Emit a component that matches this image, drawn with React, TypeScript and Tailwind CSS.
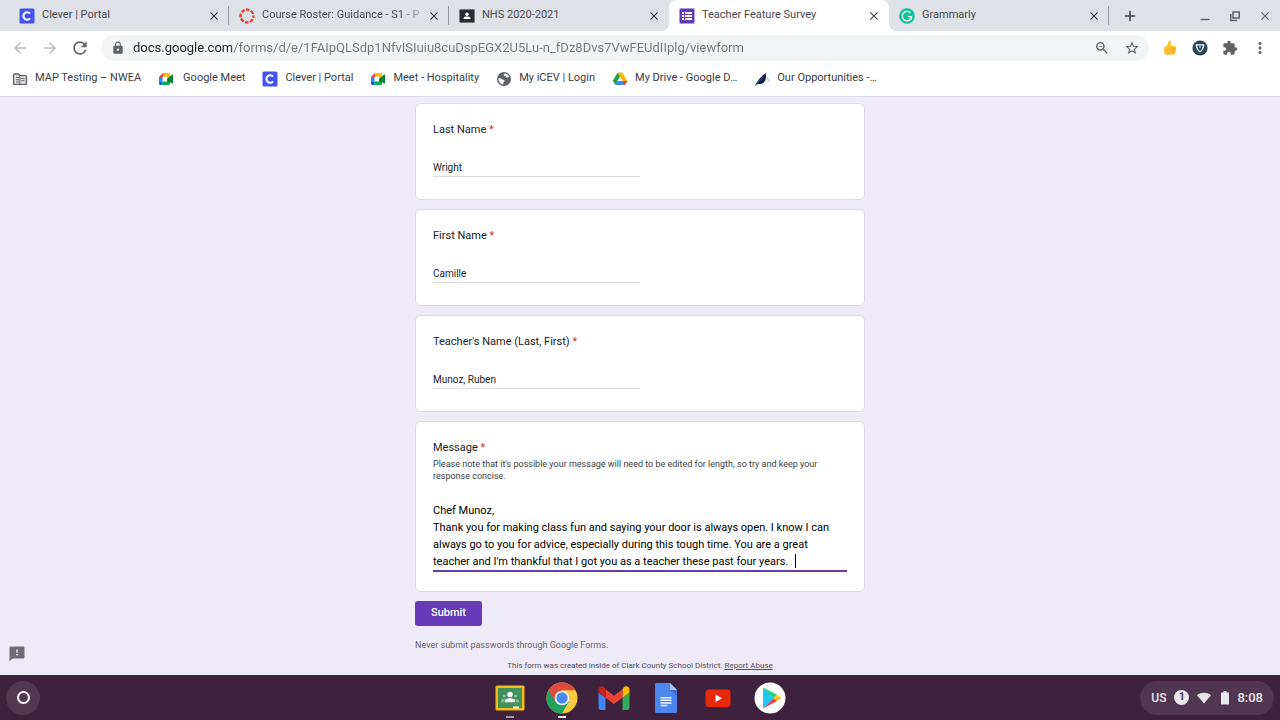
import type { ReactNode } from "react";
import {
  MdAdd,
  MdArrowBack,
  MdArrowForward,
  MdClose,
  MdExtension,
  MdFeedback,
  MdLock,
  MdMoreVert,
  MdOutlineZoomOut,
  MdRefresh,
  MdStarBorder,
} from "react-icons/md";

/* ---------- small site icons ---------- */

const CleverIcon = () => (
  <svg viewBox="0 0 16 16" className="size-4 shrink-0">
    <rect x="0.5" y="0.5" width="15" height="15" rx="1.5" fill="#4353f4" />
    <path d="M11 5.6A3.7 3.7 0 1 0 11 10.4" fill="none" stroke="#fff" strokeWidth="2.1" />
  </svg>
);

const CanvasIcon = () => (
  <svg viewBox="0 0 16 16" className="size-4 shrink-0">
    <circle cx="8" cy="8" r="6.4" fill="none" stroke="#e8402f" strokeWidth="2.4" strokeDasharray="3.6 1.427" strokeDashoffset="1.8" />
  </svg>
);

const ClassroomTabIcon = () => (
  <svg viewBox="0 0 16 16" className="size-4 shrink-0">
    <rect x="0.5" y="1.5" width="15" height="13" rx="1" fill="#2b2c2f" stroke="#77797c" />
    <circle cx="8" cy="6.2" r="1.7" fill="#fff" />
    <path d="M4.5 11V10.2C4.5 8.9 6.6 8.5 8 8.5s3.5.4 3.5 1.7V11z" fill="#fff" />
  </svg>
);

const FormsIcon = () => (
  <svg viewBox="0 0 16 16" className="size-4 shrink-0">
    <rect x="0.5" y="0.5" width="15" height="15" rx="1" fill="#673ab7" />
    <path d="M3 4h2v2H3zM6 4h7v2H6zM3 7h2v2H3zM6 7h7v2H6zM3 10h2v2H3zM6 10h7v2H6z" fill="#fff" />
  </svg>
);

const GrammarlyIcon = () => (
  <svg viewBox="0 0 16 16" className="size-4 shrink-0">
    <circle cx="8" cy="8" r="7.8" fill="#15c39a" />
    <path d="M11.3 4.7A4.7 4.7 0 1 0 12.6 9.2" fill="none" stroke="#fff" strokeWidth="1.3" />
    <path d="M9 8.7h3.4v2.9" fill="none" stroke="#fff" strokeWidth="1.3" />
  </svg>
);

const ManagedFolderIcon = () => (
  <svg viewBox="0 0 16 16" className="size-4 shrink-0">
    <path d="M2.5 3h4l1.4 1.6h5.6c.5 0 .9.4.9.9v7c0 .5-.4.9-.9.9h-11c-.5 0-.9-.4-.9-.9V3.9c0-.5.4-.9.9-.9z" fill="#e4e5e7" stroke="#5f6368" strokeWidth="1.4" />
    <path d="M4 6h3v1H4zM4 8.3h3v1H4zM4 10.6h3v1H4zM9 7h3.500v1H9zM9 9.300h3.500v1H9z" fill="#5f6368" />
    <path d="M7.900 4.600v8.700" stroke="#5f6368" />
  </svg>
);

const MeetIcon = () => (
  <svg viewBox="0 0 16 16" className="size-4 shrink-0">
    <path d="M1 6l4-4v4z" fill="#ea4335" />
    <path d="M1 6h3.5v4.5H1z" fill="#2684fc" />
    <path d="M1 10.5h3.5V14H2.2C1.5 14 1 13.5 1 12.8z" fill="#0066da" />
    <path d="M4.5 10.5H9L12 11v1.8c0 .7-.5 1.2-1.2 1.2H4.5z" fill="#00ac47" />
    <path d="M5 2h5.8c.7 0 1.2.5 1.2 1.2V6L9 8V5.5H5z" fill="#ffba00" />
    <path d="M9 8l5.2-4.5c.4-.3.8 0 .8.4v8.2c0 .5-.5.7-.8.4L12 11v1l-3-1.500z" fill="#00832d" />
  </svg>
);

const GlobeIcon = () => (
  <svg viewBox="0 0 16 16" className="size-4 shrink-0">
    <circle cx="8" cy="8" r="7" fill="#5f6368" />
    <path d="M8.600 2.500c2.200.2 4 1.500 4.800 3.500-1.200-.2-1.600.7-2.700.4-.9-.2-.5-1.100-1.500-1.300-1-.1-1.600-.5-1.500-1.300.1-.6.400-1 .9-1.300z" fill="#fff" />
    <path d="M2.400 7.500c1.500-.4 2.800-.2 3.700.7.900.8 2.300.3 2.500 1.500.1 1-1 1.100-1.200 2-.1.800-.3 1.400-.8 1.700C4.200 12.800 2.400 10.500 2.400 7.500z" fill="#fff" />
  </svg>
);

const DriveIcon = () => (
  <svg viewBox="0 0 16 16" className="size-4 shrink-0">
    <path d="M5.6 1.8h4.8L8 6z" fill="#188038" />
    <path d="M5.6 1.8L8 6l-4.700 8L.8 9.800z" fill="#1ea446" />
    <path d="M10.400 1.8l4.900 8.100h-4.800L5.600 1.800z" fill="#ffba00" />
    <path d="M5.600 9.900h9.700L12.800 14H3.300z" fill="#4285f4" />
    <path d="M15.300 9.900L12.800 14l-2.300-4.100z" fill="#ea4335" />
    <path d="M8 6l2.400 3.900H5.600z" fill="#fff" />
  </svg>
);

const QuillIcon = () => (
  <svg viewBox="0 0 16 16" className="size-4 shrink-0">
    <path d="M.8 14.800C3 11.500 6 5 12.500 1.700c-1.300 2-.3 3.300-.6 5.200-.3 2.300-1.600 5.100-4.500 5.900-1.700.5-3.200.1-4.300.6z" fill="#10244f" />
    <path d="M1 14.800C4 11 6.500 8 9.600 5.600" fill="none" stroke="#5b7096" strokeWidth=".7" />
    <path d="M12.600 5.500l2 2.500.5 3-1.700-1.800z" fill="#a9c3de" />
  </svg>
);

const ThumbIcon = () => (
  <svg viewBox="0 0 16 16" className="size-4">
    <path d="M7.300.8c1.500-.2 2 1 1.800 2.700L8.700 6h4.100c1.400 0 1.800 1.500 1 2.200.6.6.5 1.600-.1 2 .4.7.2 1.500-.4 1.900.3 1.400-.5 2.500-2 2.500H5.200C3.200 14.600 2 13.300 2 11.500V8.800C2 7 3.500 6.600 4.900 5.700 6.400 4.500 6.200 2.500 6.300 1.600c0-.4.400-.8 1-.8z" fill="#fdc22f" />
    <path d="M9.500 8.300h3.800M9.500 10.300h3.600M9.500 12.300h3.200M2.500 12c.7 1.800 2 2.400 4.500 2.500" stroke="#ec9a1b" strokeWidth=".8" fill="none" />
  </svg>
);

const ShieldIcon = () => (
  <svg viewBox="0 0 16 16" className="size-4">
    <circle cx="8" cy="8" r="7.6" fill="#27455c" />
    <path d="M3.800 4.200h8.400c.5 2.900-1.300 6.500-4.200 8.200-2.900-1.700-4.700-5.300-4.200-8.200z" fill="#fff" />
    <path d="M5.200 5.400h5.600C10.800 7.500 9.800 9.700 8 11 6.200 9.700 5.200 7.500 5.200 5.400z" fill="#27455c" />
    <path d="M6.900 6.500h2.200L8 8.600z" fill="#fff" />
  </svg>
);

/* ---------- shelf icons ---------- */

const ClassroomApp = () => (
  <svg viewBox="0 0 32 32" className="size-8">
    <rect x="1.5" y="3.500" width="29" height="25" rx="1.5" fill="#f5ba15" />
    <rect x="4" y="6" width="24" height="20" fill="#40915a" />
    <circle cx="16" cy="12.500" r="2.700" fill="#fff" />
    <path d="M10.800 20.200v-1.200c0-2 3.200-2.800 5.200-2.800s5.200.8 5.200 2.800v1.200z" fill="#fff" />
    <g fill="#8dc09d">
      <circle cx="10.300" cy="14" r="1.600" />
      <circle cx="21.700" cy="14" r="1.600" />
      <path d="M7 20.200v-1c0-1.500 1.800-2.200 3.800-2.100-.8.800-1 1.500-1 3.100zM25 20.200v-1c0-1.500-1.800-2.200-3.800-2.100.8.800 1 1.500 1 3.100z" />
    </g>
    <rect x="19" y="24.500" width="6" height="1.800" fill="#fff" />
  </svg>
);

const ChromeApp = () => (
  <svg viewBox="0 0 32 32" className="size-8">
    <circle cx="16" cy="16" r="15.5" fill="#fbc93f" />
    <path d="M2.600 8.250A15.500 15.500 0 0 0 16 31.500L22.700 19.900 16 16z" fill="#1da260" />
    <path d="M2.600 8.250A15.500 15.500 0 0 1 29.400 8.250H16V16L9.300 19.900z" fill="#dd4b3e" />
    <circle cx="16" cy="16" r="7.300" fill="#f1f3f4" />
    <circle cx="16" cy="16" r="5.700" fill="#4a88ee" />
  </svg>
);

const GmailApp = () => (
  <svg viewBox="0 0 32 32" className="size-8">
    <path d="M.5 10.500L7.500 15.700V28H2.700C1.400 28 .5 27 .5 25.800z" fill="#4285f4" />
    <path d="M31.500 10.500L24.500 15.700V28h4.800c1.300 0 2.200-1 2.200-2.200z" fill="#34a853" />
    <path d="M24.500 7.300v8.400l7-5.200V7.700c0-3-3.300-4.300-5.500-2.600z" fill="#fbbc04" />
    <path d="M7.500 15.700V7.300L16 13.700l8.500-6.400v8.400L16 22z" fill="#ea4335" />
    <path d="M.5 7.700v2.800l7 5.200V7.300L6 5.100C3.800 3.400.5 4.700.5 7.700z" fill="#c5221f" />
  </svg>
);

const DocsApp = () => (
  <svg viewBox="0 0 32 32" className="size-8">
    <path d="M6.500 1H20l7 7v21.500c0 .8-.7 1.500-1.500 1.500h-19c-.8 0-1.500-.7-1.500-1.500v-27C5 1.700 5.700 1 6.500 1z" fill="#4b87ee" />
    <path d="M20 1l7 7h-7z" fill="#a6c5fa" />
    <path d="M20 8h7v6z" fill="#3b72d2" />
    <path d="M10.500 15h11v1.500h-11zM10.500 17.600h11v1.500h-11zM10.500 20.200h11v1.500h-11zM10.500 22.800h7v1.500h-7z" fill="#eef4ff" />
  </svg>
);

const YoutubeApp = () => (
  <svg viewBox="0 0 32 32" className="size-8">
    <rect x="3.500" y="7.500" width="25" height="17.500" rx="3.500" fill="#e8290b" />
    <path d="M13.500 12.500v7.500l6.500-3.750z" fill="#fff" />
  </svg>
);

const PlayApp = () => (
  <svg viewBox="0 0 32 32" className="size-8">
    <circle cx="16" cy="16" r="15.5" fill="#fff" />
    <path d="M9 5.500v21L19.500 16z" fill="#1cc8f2" />
    <path d="M9 5.500L19.500 16l3.300-3.300z" fill="#12d178" />
    <path d="M9 26.500L19.500 16l3.300 3.300z" fill="#ee3e52" />
    <path d="M22.800 12.700L19.500 16l3.300 3.300L27.500 16z" fill="#fcc11b" />
  </svg>
);

/* ---------- data ---------- */

type Tab = { title: string; icon: ReactNode; active?: boolean; divider?: boolean; fade?: boolean };

const tabs: Tab[] = [
  { title: "Clever | Portal", icon: <CleverIcon />, divider: true },
  { title: "Course Roster: Guidance - S1 - P", icon: <CanvasIcon />, divider: true, fade: true },
  { title: "NHS 2020-2021", icon: <ClassroomTabIcon /> },
  { title: "Teacher Feature Survey", icon: <FormsIcon />, active: true },
  { title: "Grammarly", icon: <GrammarlyIcon />, divider: true },
];

const bookmarks = [
  { title: "MAP Testing – NWEA", icon: <ManagedFolderIcon /> },
  { title: "Google Meet", icon: <MeetIcon />, wide: true },
  { title: "Clever | Portal", icon: <CleverIcon /> },
  { title: "Meet - Hospitality", icon: <MeetIcon /> },
  { title: "My iCEV | Login", icon: <GlobeIcon /> },
  { title: "My Drive - Google D…", icon: <DriveIcon /> },
  { title: "Our Opportunities -…", icon: <QuillIcon /> },
];

const questions = [
  { id: "last-name", label: "Last Name", value: "Wright" },
  { id: "first-name", label: "First Name", value: "Camille" },
  { id: "teacher-name", label: "Teacher's Name (Last, First)", value: "Munoz, Ruben" },
];

const apps = [
  { name: "Classroom", icon: <ClassroomApp />, mark: "bg-[#a396a4]" },
  { name: "Chrome", icon: <ChromeApp />, mark: "bg-white" },
  { name: "Gmail", icon: <GmailApp /> },
  { name: "Docs", icon: <DocsApp /> },
  { name: "YouTube", icon: <YoutubeApp /> },
  { name: "Play Store", icon: <PlayApp /> },
];

const message =
  "Chef Munoz,\nThank you for making class fun and saying your door is always open. I know I can always go to you for advice, especially during this tough time. You are a great teacher and I'm thankful that I got you as a teacher these past four years. ";

/* ---------- browser chrome ---------- */

const IconButton = ({ label, children }: { label: string; children: ReactNode }) => (
  <button type="button" aria-label={label} className="flex h-6 w-[30px] shrink-0 items-center justify-center text-[#5f6368]">
    {children}
  </button>
);

const TabStrip = () => (
  <div className="flex h-[31px] items-stretch bg-[#dee1e6] pl-[9px]">
    {tabs.map((t) => (
      <div
        key={t.title}
        className={`relative flex w-[220px] min-w-0 items-center pl-[10px] pr-2 ${t.active ? "rounded-t-lg bg-white" : ""}`}
      >
        {t.active && (
          <>
            <span className="absolute bottom-0 -left-2 size-2 bg-[radial-gradient(circle_at_0_0,transparent_8px,white_8px)]" />
            <span className="absolute bottom-0 -right-2 size-2 bg-[radial-gradient(circle_at_100%_0,transparent_8px,white_8px)]" />
          </>
        )}
        {t.icon}
        <span
          className={`ml-[7px] flex-1 whitespace-nowrap text-[11px] ${
            t.fade ? "bg-[linear-gradient(to_right,#45494d_85%,#dee1e6)] bg-clip-text text-transparent" : "text-[#45494d]"
          }`}
        >
          {t.title}
        </span>
        <button type="button" aria-label={`Close ${t.title}`} className="text-[#3c4043]">
          <MdClose className="size-3.5" />
        </button>
        {t.divider && <span className="absolute right-0 h-[19px] w-px bg-[#94989d]" />}
      </div>
    ))}
    <button type="button" aria-label="New tab" className="ml-3 text-[#3c4043]">
      <MdAdd className="size-[18px]" />
    </button>
    <div className="ml-auto flex items-center">
      <IconButton label="Minimize">
        <svg viewBox="0 0 12 12" className="size-3">
          <path d="M1.500 9.500h9" stroke="currentColor" strokeWidth="1.500" />
        </svg>
      </IconButton>
      <IconButton label="Restore">
        <svg viewBox="0 0 12 12" className="size-3">
          <path d="M4 2h6.200v6H4zM1.800 4v6.500h6.500" fill="none" stroke="currentColor" strokeWidth="1.500" />
        </svg>
      </IconButton>
      <IconButton label="Close window">
        <MdClose className="size-3.5" />
      </IconButton>
    </div>
  </div>
);

const Toolbar = () => (
  <div className="flex items-center px-[5px] pt-1">
    <IconButton label="Back">
      <MdArrowBack className="size-[18px] text-[#babcbe]" />
    </IconButton>
    <IconButton label="Forward">
      <MdArrowForward className="size-[18px] text-[#babcbe]" />
    </IconButton>
    <IconButton label="Reload">
      <MdRefresh className="size-5" />
    </IconButton>
    <div className="mx-[6px] flex h-[26px] flex-1 items-center rounded-full bg-[#f1f3f4] pl-[10px] pr-0.5">
      <MdLock className="size-3.5 shrink-0 text-[#5f6368]" />
      <input
        aria-label="Address"
        className="ml-2 min-w-0 flex-1 bg-[linear-gradient(to_right,#202124_99px,#74787c_99px)] bg-clip-text text-[13px] text-transparent outline-none"
        defaultValue="docs.google.com/forms/d/e/1FAIpQLSdp1NfvISIuiu8cuDspEGX2U5Lu-n_fDz8Dvs7VwFEUdIIplg/viewform"
      />
      <IconButton label="Zoom">
        <MdOutlineZoomOut className="size-4" />
      </IconButton>
      <IconButton label="Bookmark this page">
        <MdStarBorder className="size-4" />
      </IconButton>
    </div>
    <IconButton label="Thumbs up extension">
      <ThumbIcon />
    </IconButton>
    <IconButton label="Shield extension">
      <ShieldIcon />
    </IconButton>
    <IconButton label="Extensions">
      <MdExtension className="size-4" />
    </IconButton>
    <IconButton label="Menu">
      <MdMoreVert className="size-[18px]" />
    </IconButton>
  </div>
);

const BookmarksBar = () => (
  <nav className="flex h-9 items-center gap-[17px] border-b border-[#dcdce2] px-3 text-[11px] text-[#3c4043]">
    {bookmarks.map((b) => (
      <a key={b.title} href="#" className={`flex items-center whitespace-nowrap ${b.wide ? "gap-[9px]" : "gap-[7px]"}`}>
        {b.icon}
        {b.title}
      </a>
    ))}
  </nav>
);

/* ---------- form ---------- */

const Card = ({ children }: { children: ReactNode }) => (
  <div className="rounded-md border border-[#dadce0] bg-white px-[17px] pt-[18px]">{children}</div>
);

const Label = ({ id, text }: { id: string; text: string }) => (
  <label htmlFor={id} className="block text-[11px] leading-4 text-[#202124]">
    {text} <span className="text-[#d93025]">*</span>
  </label>
);

const Survey = () => (
  <form className="mx-auto flex w-full max-w-[450px] flex-col gap-[9px]" onSubmit={(e) => e.preventDefault()}>
    {questions.map((q) => (
      <Card key={q.id}>
        <Label id={q.id} text={q.label} />
        <input
          id={q.id}
          defaultValue={q.value}
          className="mt-5 mb-[22px] block h-[19px] w-1/2 border-b border-[#dadbdc] text-[10px] text-[#202124] outline-none"
        />
      </Card>
    ))}
    <Card>
      <Label id="message" text="Message" />
      <p className="mt-[2px] text-[9px] leading-[12px] text-[#3c4043]">
        Please note that it's possible your message will need to be edited for length, so try and keep your response concise.
      </p>
      <div className="relative mt-5 mb-[19px]">
        <textarea
          id="message"
          rows={4}
          defaultValue={message}
          className="block w-full resize-none overflow-hidden border-b-2 border-[#673ab7] text-[11px] leading-[17px] text-black outline-none"
        />
        <span className="absolute right-[51px] bottom-1 h-3.5 w-px bg-black" />
      </div>
    </Card>
    <button type="submit" className="h-[25px] w-[67px] rounded-[3px] bg-[#673ab7] text-[11px] font-medium text-white">
      Submit
    </button>
    <p className="mt-1 text-[9px] leading-[12px] text-[#66646d]">Never submit passwords through Google Forms.</p>
    <p className="text-center text-[8px] leading-[12px] text-[#504e57]">
      This form was created inside of Clark County School District.{" "}
      <a href="#" className="underline">
        Report Abuse
      </a>
    </p>
  </form>
);

/* ---------- shelf ---------- */

const Shelf = () => (
  <footer className="grid h-[45px] grid-cols-[1fr_auto_1fr] items-center bg-[#3d213d] px-[6px]">
    <button type="button" aria-label="Launcher" className="flex size-[34px] items-center justify-center rounded-full bg-[#533851]">
      <span className="size-[13px] rounded-full border-2 border-white" />
    </button>
    <div className="flex gap-5">
      {apps.map((a) => (
        <button key={a.name} type="button" aria-label={a.name} className="relative flex h-[45px] items-center">
          {a.icon}
          {a.mark && <span className={`absolute bottom-[2px] left-1/2 h-[2px] w-2 -translate-x-1/2 ${a.mark}`} />}
        </button>
      ))}
    </div>
    <button
      type="button"
      className="flex h-[34px] items-center justify-self-end rounded-full bg-[#503650] px-[11px] text-[#e8e6ea]"
    >
      <span className="text-[12px] font-medium">US</span>
      <span className="ml-2 flex size-[15px] items-center justify-center rounded-full bg-[#e8e6ea] text-[11px] font-bold text-[#503650]">
        1
      </span>
      <svg viewBox="0 0 14 12" className="ml-2 h-3 w-3.5">
        <path d="M0 3.200C4 0 10 0 14 3.200L7 11.500z" fill="currentColor" />
      </svg>
      <svg viewBox="0 0 8 14" className="ml-[10px] h-3.5 w-2">
        <path d="M2.500 0h3v1.500H8V13.500H0V1.500h2.500z" fill="currentColor" />
      </svg>
      <span className="ml-2 text-[13px] font-medium">8:08</span>
    </button>
  </footer>
);

export default function App() {
  return (
    <div className="flex min-h-screen flex-col bg-white font-[Roboto,sans-serif]">
      <header>
        <TabStrip />
        <Toolbar />
        <BookmarksBar />
      </header>
      <main className="relative flex-1 bg-[#efeaf8] px-4 pt-[6px] pb-[3px]">
        <Survey />
        <button type="button" aria-label="Report a problem" className="absolute bottom-3 left-2 text-[#6f6d74]">
          <MdFeedback className="size-[18px]" />
        </button>
      </main>
      <Shelf />
    </div>
  );
}
